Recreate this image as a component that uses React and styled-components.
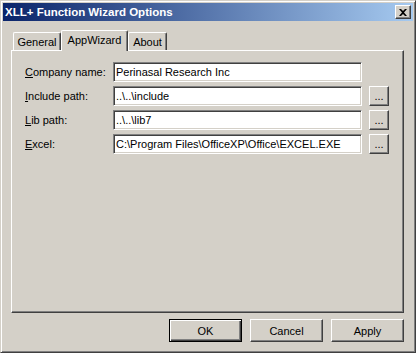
import React from 'react'
import styled, { createGlobalStyle } from 'styled-components'

const GlobalStyle = createGlobalStyle`
  html, body {
    margin: 0;
    padding: 0;
    background: #d4d0c8;
  }
  body {
    font-family: "Liberation Sans", Arial, sans-serif;
    font-size: 11px;
    color: #000;
  }
`

const fields = [
  { label: 'Company name:', key: 'C', rest: 'ompany name:', value: 'Perinasal Research Inc', browse: false },
  { label: 'Include path:', key: 'I', rest: 'nclude path:', value: '..\\..\\include', browse: true },
  { label: 'Lib path:', key: 'L', rest: 'ib path:', value: '..\\..\\lib7', browse: true },
  { label: 'Excel:', key: 'E', rest: 'xcel:', value: 'C:\\Program Files\\OfficeXP\\Office\\EXCEL.EXE', browse: true },
]

const tabs = [
  { text: 'General', width: 48 },
  { text: 'AppWizard', width: 67, active: true },
  { text: 'About', width: 39 },
]

function App() {
  return (
    <>
      <GlobalStyle />
      <Window>
        <TitleBar>
          <Title>XLL+ Function Wizard Options</Title>
          <CloseButton>
            <svg width="8" height="7" viewBox="0 0 8 7">
              <path d="M0 0h2l2 2 2-2h2L5 3.5 8 7H6L4 5 2 7H0l3-3.5z" fill="#000" />
            </svg>
          </CloseButton>
        </TitleBar>
        <Body>
          <TabStrip>
            {tabs.map(t => (
              <Tab key={t.text} $width={t.width} $active={t.active}>
                {t.text}
              </Tab>
            ))}
          </TabStrip>
          <Panel>
            <Form>
              {fields.map(f => (
                <React.Fragment key={f.label}>
                  <Label>
                    <u>{f.key}</u>{f.rest}
                  </Label>
                  <TextBox readOnly value={f.value} />
                  {f.browse ? <BrowseButton>...</BrowseButton> : <span />}
                </React.Fragment>
              ))}
            </Form>
          </Panel>
          <Footer>
            <Button $default>OK</Button>
            <Button>Cancel</Button>
            <Button>Apply</Button>
          </Footer>
        </Body>
      </Window>
    </>
  )
}

export default App

const Window = styled.div`
  width: 416px;
  height: 353px;
  box-sizing: border-box;
  background: #d4d0c8;
  border: 1px solid;
  border-color: #d4d0c8 #404040 #404040 #d4d0c8;
  box-shadow: inset 1px 1px #fff, inset -1px -1px #808080;
  padding: 2px;
  display: flex;
  flex-direction: column;
`

const TitleBar = styled.div`
  height: 18px;
  flex: 0 0 18px;
  display: flex;
  align-items: center;
  justify-content: space-between;
  padding: 0 2px 0 2px;
  background: linear-gradient(to right, #0a246a, #a6caf0);
`

const Title = styled.div`
  color: #fff;
  font-weight: bold;
  font-size: 11.5px;
  white-space: nowrap;
`

const CloseButton = styled.div`
  width: 16px;
  height: 14px;
  box-sizing: border-box;
  display: flex;
  align-items: center;
  justify-content: center;
  background: #d4d0c8;
  border: 1px solid;
  border-color: #fff #404040 #404040 #fff;
  box-shadow: inset -1px -1px #808080;
`

const Body = styled.div`
  flex: 1;
  display: flex;
  flex-direction: column;
  padding: 9px 9px 0 8px;
`

const TabStrip = styled.div`
  height: 20px;
  display: flex;
  align-items: flex-end;
  padding-left: 2px;
  position: relative;
  z-index: 1;
`

const Tab = styled.div`
  width: ${p => p.$width}px;
  height: ${p => (p.$active ? 21 : 18)}px;
  margin-bottom: ${p => (p.$active ? -1 : 0)}px;
  box-sizing: border-box;
  display: flex;
  justify-content: center;
  padding-top: ${p => (p.$active ? 3 : 3)}px;
  background: #d4d0c8;
  border-top: 1px solid #fff;
  border-left: 1px solid #fff;
  border-right: 1px solid #404040;
  border-radius: 2px 2px 0 0;
  box-shadow: inset -1px 0 #808080;
  white-space: nowrap;
`

const Panel = styled.div`
  height: 263px;
  box-sizing: border-box;
  border: 1px solid;
  border-color: #fff #404040 #404040 #fff;
  box-shadow: inset -1px -1px #808080;
  padding: 11px 0 0 13px;
`

const Form = styled.div`
  display: grid;
  grid-template-columns: 88px 249px 27px;
  grid-auto-rows: 20px;
  row-gap: 4px;
  align-items: center;
`

const Label = styled.div`
  white-space: nowrap;
  padding-bottom: 1px;
`

const TextBox = styled.input`
  height: 20px;
  width: 249px;
  box-sizing: border-box;
  margin: 0;
  padding: 0 2px;
  font: 11px "Liberation Sans", Arial, sans-serif;
  color: #000;
  background: #fff;
  border: 1px solid;
  border-color: #808080 #fff #fff #808080;
  box-shadow: inset 1px 1px #404040, inset -1px -1px #d4d0c8;
  outline: none;
`

const BrowseButton = styled.div`
  width: 20px;
  height: 20px;
  margin-left: 7px;
  box-sizing: border-box;
  display: flex;
  align-items: center;
  justify-content: center;
  padding-bottom: 1px;
  border: 1px solid;
  border-color: #fff #404040 #404040 #fff;
  box-shadow: inset -1px -1px #808080;
`

const Footer = styled.div`
  display: flex;
  justify-content: flex-end;
  gap: 8px;
  margin-top: 6px;
`

const Button = styled.div`
  width: 73px;
  height: 23px;
  box-sizing: border-box;
  display: flex;
  align-items: center;
  justify-content: center;
  border: 1px solid;
  border-color: ${p => (p.$default ? '#000' : '#fff #404040 #404040 #fff')};
  box-shadow: ${p =>
    p.$default
      ? 'inset 1px 1px #fff, inset -1px -1px #404040, inset -2px -2px #808080'
      : 'inset -1px -1px #808080'};
`
